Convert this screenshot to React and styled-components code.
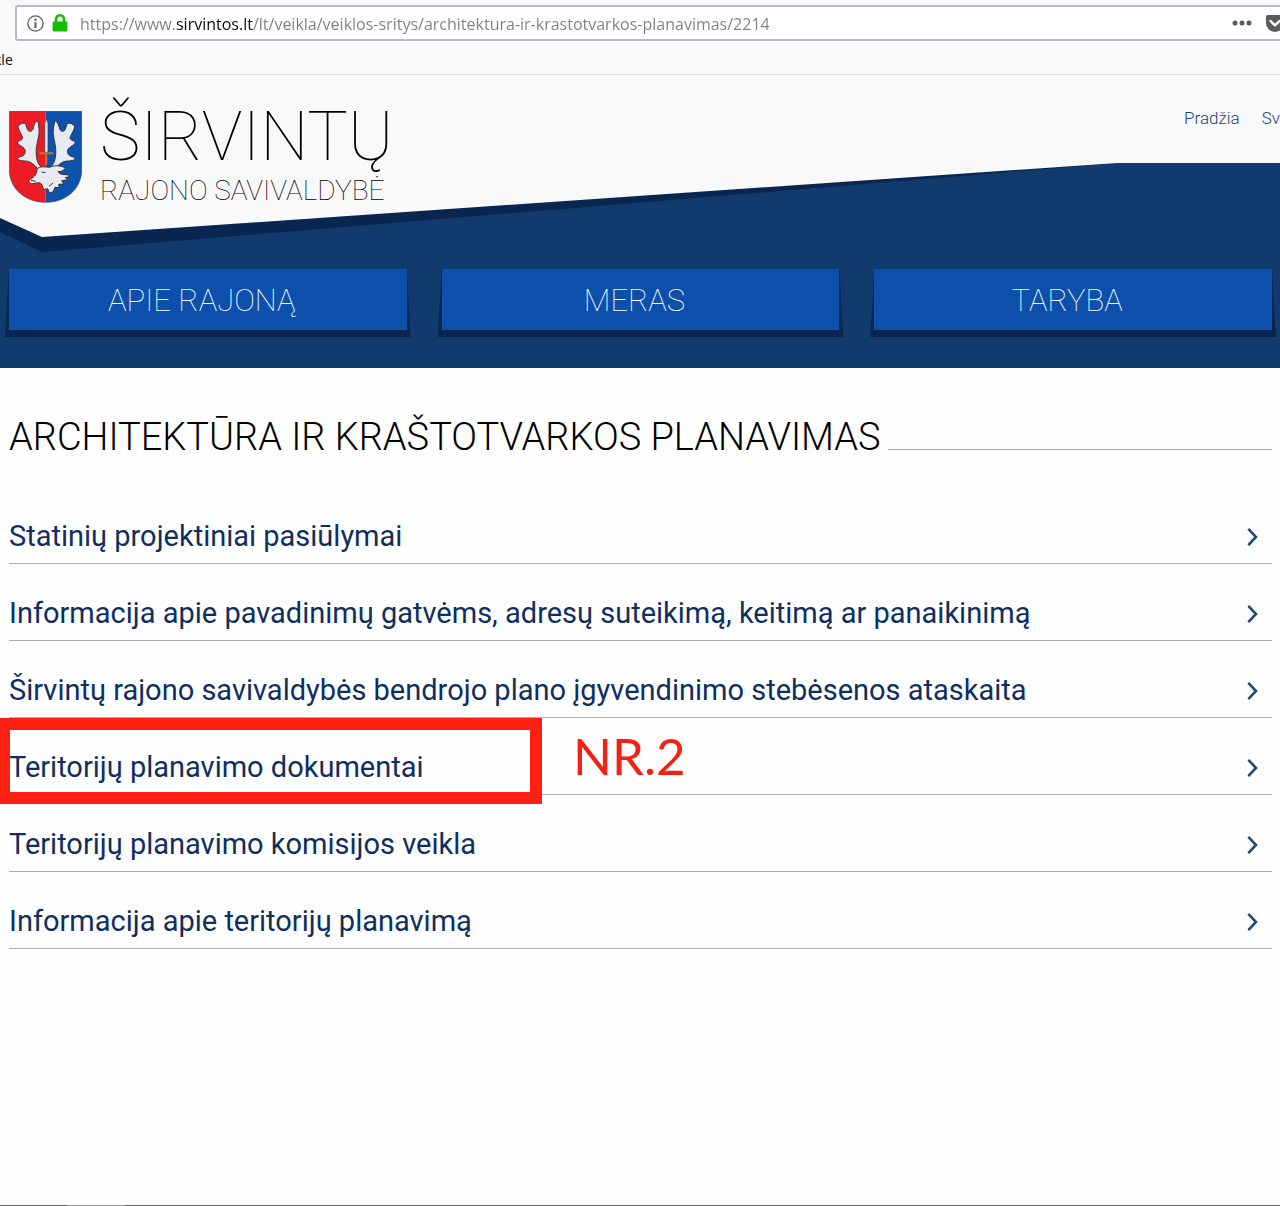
import React from 'react';
import styled, { createGlobalStyle } from 'styled-components';

const GlobalStyle = createGlobalStyle`
  *, *::before, *::after { box-sizing: border-box; }
  body { margin: 0; background: #fefefe; font-family: Roboto, "Liberation Sans", sans-serif; }
`;

const Page = styled.div`
  display: flex;
  flex-direction: column;
  min-height: 100vh;
  overflow: hidden;
`;

const BrowserChrome = styled.div`
  padding-top: 5px;
  background: #f9f9fb;
  border-bottom: 1px solid #dcdde0;
  font-family: "Open Sans", "Noto Sans", sans-serif;
`;

const AddressBar = styled.div`
  display: flex;
  align-items: center;
  height: 36px;
  margin: 0 -8px 0 15px;
  padding: 0 2px 0 10px;
  background: #fff;
  border: 2px solid #bbbbbd;
  border-radius: 3px;
`;

const IconButton = styled.button`
  display: flex;
  flex: none;
  margin: 0 ${(p) => p.$gap || 0}px 0 0;
  padding: 0;
  border: 0;
  background: none;
`;

const UrlInput = styled.input`
  flex: 1;
  min-width: 0;
  height: 30px;
  padding: 2px 0 0;
  border: 0;
  outline: 0;
  font: 16px/28px "Open Sans", "Noto Sans", sans-serif;
  color: #808080;
  background: linear-gradient(90deg, #808080 96px, #0c0c0d 96px, #0c0c0d 173px, #808080 173px);
  -webkit-background-clip: text;
  background-clip: text;
  -webkit-text-fill-color: transparent;
`;

const Bookmarks = styled.div`
  display: flex;
  height: 33px;
  padding-top: 9px;
  overflow: hidden;
`;

const Bookmark = styled.a`
  margin-left: -6px;
  font-size: 14px;
  line-height: 20px;
  color: #0c0c0d;
  text-decoration: none;
`;

const Header = styled.header`
  position: relative;
  isolation: isolate;
  padding: 22px 8px 38px 9px;
  background: #113a6d;
`;

const Slope = styled.div`
  position: absolute;
  z-index: -1;
  inset: 0 0 auto;
  height: 177px;
  background: ${(p) => (p.$shadow ? '#08264f' : '#f9f9f9')};
  clip-path: ${(p) =>
    p.$shadow
      ? 'polygon(0 0, 100% 0, 100% 88px, 87.3% 88px, 42px 177px, 0 157px)'
      : 'polygon(0 0, 100% 0, 100% 88px, 87.3% 88px, 42px 162px, 0 143px)'};
`;

const Masthead = styled.div`
  display: flex;
  justify-content: space-between;
  align-items: flex-start;
  height: 172px;
`;

const Brand = styled.a`
  display: flex;
  gap: 18px;
  color: #000;
  text-decoration: none;
`;

const Crest = styled.svg`
  display: block;
  width: 73px;
  height: 92px;
  margin-top: 14px;
`;

const BrandText = styled.span`
  display: flex;
  flex-direction: column;
  font-weight: 100;
`;

const BrandName = styled.span`
  font-size: 68px;
  line-height: 80px;
`;

const BrandSub = styled.span`
  font-size: 28px;
  line-height: 28px;
`;

const TopLinks = styled.nav`
  display: flex;
  gap: 22px;
  margin-right: -8px;
  padding-top: 11px;
`;

const TopLink = styled.a`
  font-size: 17px;
  font-weight: 300;
  line-height: 20px;
  color: #1d4379;
  text-decoration: none;
`;

const MainNav = styled.nav`
  display: grid;
  grid-template-columns: repeat(3, 1fr);
  gap: 35px;
`;

const NavLink = styled.a`
  position: relative;
  height: 61px;
  padding-right: 12px;
  font-size: 31px;
  font-weight: 100;
  line-height: 64px;
  text-align: center;
  color: #fff;
  background: #0c50ab;
  text-decoration: none;

  &::before {
    content: '';
    position: absolute;
    z-index: -1;
    inset: 0 -4px -7px;
    background: #08264f;
    clip-path: polygon(4px 0, calc(100% - 4px) 0, 100% 100%, 0 100%);
  }
`;

const Main = styled.main`
  flex: 1;
  padding: 41px 8px 40px 9px;
`;

const TitleRow = styled.div`
  display: flex;
  align-items: flex-start;
  gap: 7px;
  margin-bottom: 22px;

  &::after {
    content: '';
    flex: 1;
    height: 41px;
    border-bottom: 1px solid #b0b0b0;
  }
`;

const Title = styled.h1`
  margin: 0;
  font-size: 38px;
  font-weight: 300;
  line-height: 56px;
  color: #000;
`;

const List = styled.ul`
  margin: 0;
  padding: 0;
  list-style: none;
`;

const Item = styled.li`
  position: relative;
`;

const ItemLink = styled.a`
  display: flex;
  align-items: center;
  justify-content: space-between;
  height: 77px;
  padding: 22px 14px 0 0;
  border-bottom: 1px solid #b0b0b0;
  font-size: 29px;
  line-height: 36px;
  color: #0f2f60;
  text-decoration: none;
`;

const Arrow = styled.svg`
  flex: none;
  margin-top: 2px;
`;

const Highlight = styled.div`
  position: absolute;
  top: 0;
  left: -9px;
  width: 542px;
  height: 86px;
  border: 12px solid #fe2013;
  border-left-width: 10px;
  pointer-events: none;
`;

const Note = styled.span`
  position: absolute;
  top: 7px;
  left: 564px;
  font-family: Lato, "Open Sans", sans-serif;
  font-size: 51px;
  line-height: 62px;
  color: #f32014;
`;

const BottomEdge = styled.footer`
  height: 1px;
  background: linear-gradient(90deg, #666861 67px, #999a96 67px, #999a96 125px, #666861 125px);
`;

const CoatOfArms = () => (
  <Crest viewBox="0 0 219 276" aria-hidden="true">
    <path d="M1 1H110V274C50 274 1 235 1 175Z" fill="#ed1c24" />
    <path d="M110 1H218V175C218 235 170 274 110 274Z" fill="#0d52ad" />
    <path d="M1 1H218V175C218 235 170 274 110 274S1 235 1 175Z" fill="none" stroke="#33405f" strokeWidth="2" />
    <path d="M112 22L117 36V124H107V36Z" fill="#dfe3ec" stroke="#34333c" strokeWidth="2" />
    <g fill="#e9eaf0" stroke="#34333c" strokeWidth="3" strokeLinejoin="round">
      <path d="M100 170C84 160 80 138 82 112C84 92 93 70 90 53L87 30C78 31 75 42 72 54C67 64 58 62 55 55L50 39C44 34 32 37 27 47C28 57 36 67 40 77C44 87 34 86 25 93C25 101 38 105 45 112C51 119 49 130 42 134C35 138 27 137 26 143C30 151 45 149 56 151C68 154 76 163 86 172Z" />
      <path d="M122 170C137 160 142 138 140 112C138 92 130 70 133 53L137 30C145 31 149 42 152 54C157 64 166 62 169 55L174 39C180 34 192 37 197 47C196 57 188 67 184 77C180 87 190 86 199 93C199 101 186 105 179 112C173 119 175 130 182 134C189 138 197 137 198 143C194 151 179 149 168 151C156 154 148 163 138 172Z" />
      <path d="M84 175C92 164 108 168 122 169C138 161 156 164 169 171C166 180 154 182 147 182L154 189L178 192C183 196 177 199 169 199L175 207L158 209L165 219L149 220L151 230L138 229L132 243L121 245L116 233L104 236L98 219C88 211 77 219 66 218C58 215 58 207 66 203C76 198 84 188 84 175Z" />
    </g>
    <path d="M93 127H131M112 127V158" stroke="#b77932" strokeWidth="6" strokeLinecap="round" />
    <path d="M98 183L109 185M66 208L80 211M120 226L132 216" stroke="#34333c" strokeWidth="3" fill="none" />
  </Crest>
);

const Chevron = () => (
  <Arrow width="11" height="20" viewBox="0 0 11 20" fill="none" aria-hidden="true">
    <path d="M1.3 1.8L9 10L1.3 18.2" stroke="#254776" strokeWidth="2.6" />
  </Arrow>
);

const navItems = ['APIE RAJONĄ', 'MERAS', 'TARYBA'];

const topics = [
  { title: 'Statinių projektiniai pasiūlymai' },
  { title: 'Informacija apie pavadinimų gatvėms, adresų suteikimą, keitimą ar panaikinimą' },
  { title: 'Širvintų rajono savivaldybės bendrojo plano įgyvendinimo stebėsenos ataskaita' },
  { title: 'Teritorijų planavimo dokumentai', note: 'NR.2' },
  { title: 'Teritorijų planavimo komisijos veikla' },
  { title: 'Informacija apie teritorijų planavimą' },
];

export default function App() {
  return (
    <Page>
      <GlobalStyle />
      <BrowserChrome>
        <AddressBar>
          <IconButton $gap={8} aria-label="Site information">
            <svg width="17" height="17" viewBox="0 0 17 17" fill="none" aria-hidden="true">
              <circle cx="8.5" cy="8.5" r="7.6" stroke="#5b5b5d" strokeWidth="1.3" />
              <circle cx="8.5" cy="4.8" r="1.2" fill="#5b5b5d" />
              <path d="M8.5 7.2V13" stroke="#5b5b5d" strokeWidth="2" />
            </svg>
          </IconButton>
          <IconButton $gap={12} aria-label="Secure connection">
            <svg width="16" height="18" viewBox="0 0 16 18" aria-hidden="true">
              <path d="M4 9V5.3A4 4 0 0 1 12 5.3V9" fill="none" stroke="#12bc00" strokeWidth="2.6" />
              <rect x="0.6" y="7.6" width="14.8" height="9.8" rx="1.4" fill="#12bc00" />
            </svg>
          </IconButton>
          <UrlInput
            aria-label="URL"
            defaultValue="https://www.sirvintos.lt/lt/veikla/veiklos-sritys/architektura-ir-krastotvarkos-planavimas/2214"
          />
          <IconButton $gap={14} aria-label="Page actions">
            <svg width="20" height="6" viewBox="0 0 20 6" fill="#5b5b5d" aria-hidden="true">
              <circle cx="3" cy="3" r="2.5" />
              <circle cx="10" cy="3" r="2.5" />
              <circle cx="17" cy="3" r="2.5" />
            </svg>
          </IconButton>
          <IconButton aria-label="Pocket">
            <svg width="18" height="17" viewBox="0 0 18 17" aria-hidden="true">
              <path d="M2 0H16A2 2 0 0 1 18 2V8A9 9 0 0 1 0 8V2A2 2 0 0 1 2 0Z" fill="#5b5b5d" />
              <path d="M4.5 6L9 10.3L13.5 6" fill="none" stroke="#fff" strokeWidth="2.4" strokeLinecap="round" strokeLinejoin="round" />
            </svg>
          </IconButton>
        </AddressBar>
        <Bookmarks>
          <Bookmark href="#">kle</Bookmark>
        </Bookmarks>
      </BrowserChrome>
      <Header>
        <Slope $shadow />
        <Slope />
        <Masthead>
          <Brand href="#">
            <CoatOfArms />
            <BrandText>
              <BrandName>ŠIRVINTŲ</BrandName>
              <BrandSub>RAJONO SAVIVALDYBĖ</BrandSub>
            </BrandText>
          </Brand>
          <TopLinks>
            <TopLink href="#">Pradžia</TopLink>
            <TopLink href="#">Sv</TopLink>
          </TopLinks>
        </Masthead>
        <MainNav>
          {navItems.map((label) => (
            <NavLink href="#" key={label}>{label}</NavLink>
          ))}
        </MainNav>
      </Header>
      <Main>
        <TitleRow>
          <Title>ARCHITEKTŪRA IR KRAŠTOTVARKOS PLANAVIMAS</Title>
        </TitleRow>
        <List>
          {topics.map(({ title, note }) => (
            <Item key={title}>
              <ItemLink href="#">
                {title}
                <Chevron />
              </ItemLink>
              {note && (
                <>
                  <Highlight />
                  <Note>{note}</Note>
                </>
              )}
            </Item>
          ))}
        </List>
      </Main>
      <BottomEdge />
    </Page>
  );
}
